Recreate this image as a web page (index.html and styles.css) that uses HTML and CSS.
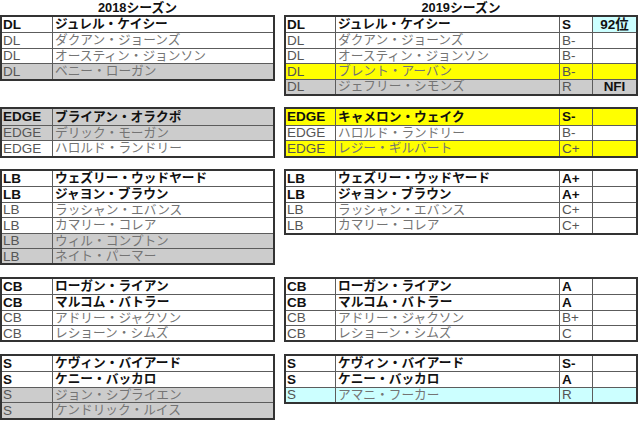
FILE: index.html
```html
<!DOCTYPE html>
<html lang="ja">
<head>
<meta charset="utf-8">
<link rel="stylesheet" href="styles.css">
</head>
<body>
<div class="sheet">
  <div class="section titles">
    <div class="title t18w">2018シーズン</div>
    <div class="title t19w">2019シーズン</div>
  </div>

  <div class="section">
    <div class="tbl t18">
      <div class="row b"><span class="c p">DL</span><span class="c n">ジュレル・ケイシー</span></div>
      <div class="row"><span class="c p">DL</span><span class="c n">ダクアン・ジョーンズ</span></div>
      <div class="row"><span class="c p">DL</span><span class="c n">オースティン・ジョンソン</span></div>
      <div class="row g"><span class="c p">DL</span><span class="c n">ベニー・ローガン</span></div>
    </div>
    <div class="tbl t19">
      <div class="row b"><span class="c p">DL</span><span class="c n">ジュレル・ケイシー</span><span class="c r">S</span><span class="c x rank">92位</span></div>
      <div class="row"><span class="c p">DL</span><span class="c n">ダクアン・ジョーンズ</span><span class="c r">B-</span><span class="c x"></span></div>
      <div class="row"><span class="c p">DL</span><span class="c n">オースティン・ジョンソン</span><span class="c r">B-</span><span class="c x"></span></div>
      <div class="row y"><span class="c p">DL</span><span class="c n">ブレント・アーバン</span><span class="c r">B-</span><span class="c x"></span></div>
      <div class="row g"><span class="c p">DL</span><span class="c n">ジェフリー・シモンズ</span><span class="c r">R</span><span class="c x nfi">NFI</span></div>
    </div>
  </div>

  <div class="section">
    <div class="tbl t18">
      <div class="row b g"><span class="c p">EDGE</span><span class="c n">ブライアン・オラクポ</span></div>
      <div class="row g"><span class="c p">EDGE</span><span class="c n">デリック・モーガン</span></div>
      <div class="row"><span class="c p">EDGE</span><span class="c n">ハロルド・ランドリー</span></div>
    </div>
    <div class="tbl t19">
      <div class="row b y"><span class="c p">EDGE</span><span class="c n">キャメロン・ウェイク</span><span class="c r">S-</span><span class="c x"></span></div>
      <div class="row"><span class="c p">EDGE</span><span class="c n">ハロルド・ランドリー</span><span class="c r">B-</span><span class="c x"></span></div>
      <div class="row y"><span class="c p">EDGE</span><span class="c n">レジー・ギルバート</span><span class="c r">C+</span><span class="c x"></span></div>
    </div>
  </div>

  <div class="section">
    <div class="tbl t18">
      <div class="row b"><span class="c p">LB</span><span class="c n">ウェズリー・ウッドヤード</span></div>
      <div class="row b"><span class="c p">LB</span><span class="c n">ジャヨン・ブラウン</span></div>
      <div class="row"><span class="c p">LB</span><span class="c n">ラッシャン・エバンス</span></div>
      <div class="row"><span class="c p">LB</span><span class="c n">カマリー・コレア</span></div>
      <div class="row g"><span class="c p">LB</span><span class="c n">ウィル・コンプトン</span></div>
      <div class="row g"><span class="c p">LB</span><span class="c n">ネイト・パーマー</span></div>
    </div>
    <div class="tbl t19">
      <div class="row b"><span class="c p">LB</span><span class="c n">ウェズリー・ウッドヤード</span><span class="c r">A+</span><span class="c x"></span></div>
      <div class="row b"><span class="c p">LB</span><span class="c n">ジャヨン・ブラウン</span><span class="c r">A+</span><span class="c x"></span></div>
      <div class="row"><span class="c p">LB</span><span class="c n">ラッシャン・エバンス</span><span class="c r">C+</span><span class="c x"></span></div>
      <div class="row"><span class="c p">LB</span><span class="c n">カマリー・コレア</span><span class="c r">C+</span><span class="c x"></span></div>
    </div>
  </div>

  <div class="section">
    <div class="tbl t18">
      <div class="row b"><span class="c p">CB</span><span class="c n">ローガン・ライアン</span></div>
      <div class="row b"><span class="c p">CB</span><span class="c n">マルコム・バトラー</span></div>
      <div class="row"><span class="c p">CB</span><span class="c n">アドリー・ジャクソン</span></div>
      <div class="row"><span class="c p">CB</span><span class="c n">レショーン・シムズ</span></div>
    </div>
    <div class="tbl t19">
      <div class="row b"><span class="c p">CB</span><span class="c n">ローガン・ライアン</span><span class="c r">A</span><span class="c x"></span></div>
      <div class="row b"><span class="c p">CB</span><span class="c n">マルコム・バトラー</span><span class="c r">A</span><span class="c x"></span></div>
      <div class="row"><span class="c p">CB</span><span class="c n">アドリー・ジャクソン</span><span class="c r">B+</span><span class="c x"></span></div>
      <div class="row"><span class="c p">CB</span><span class="c n">レショーン・シムズ</span><span class="c r">C</span><span class="c x"></span></div>
    </div>
  </div>

  <div class="section">
    <div class="tbl t18">
      <div class="row b"><span class="c p">S</span><span class="c n">ケヴィン・バイアード</span></div>
      <div class="row b"><span class="c p">S</span><span class="c n">ケニー・バッカロ</span></div>
      <div class="row g"><span class="c p">S</span><span class="c n">ジョン・シプライエン</span></div>
      <div class="row g"><span class="c p">S</span><span class="c n">ケンドリック・ルイス</span></div>
    </div>
    <div class="tbl t19">
      <div class="row b"><span class="c p">S</span><span class="c n">ケヴィン・バイアード</span><span class="c r">S-</span><span class="c x"></span></div>
      <div class="row b"><span class="c p">S</span><span class="c n">ケニー・バッカロ</span><span class="c r">A</span><span class="c x"></span></div>
      <div class="row cy"><span class="c p">S</span><span class="c n">アマニ・フーカー</span><span class="c r">R</span><span class="c x"></span></div>
    </div>
  </div>
</div>
</body>
</html>
```

FILE: styles.css
```css
html, body {
  margin: 0;
  padding: 0;
  background: #ffffff;
}

body {
  font-family: "Liberation Sans", "Noto Sans CJK JP", sans-serif;
  font-size: 13.5px;
  color: #555555;
}

.sheet {
  width: 640px;
}

.section {
  display: flex;
  align-items: flex-start;
  gap: 9px;
  margin-bottom: 11.4px;
}

.titles {
  height: 15px;
  margin-bottom: 0;
}

.title {
  font-weight: bold;
  font-size: 12.8px;
  color: #111111;
  text-align: center;
  line-height: 16px;
}

.t18w { width: 275px; }
.t19w { width: 354px; }

.tbl {
  border: 2px solid #333333;
  display: flex;
  flex-direction: column;
  background: #ffffff;
}

.t18 { width: 275px; box-sizing: border-box; }
.t19 { width: 354px; box-sizing: border-box; }

.row {
  display: grid;
  height: 15.41px;
  box-sizing: border-box;
}

.row + .row {
  border-top: 1px solid #5c5c5c;
}

.t18 .row { grid-template-columns: 50px 221px; }
.t19 .row { grid-template-columns: 49px 224px 33px 44px; }

.c {
  display: flex;
  align-items: center;
  padding-left: 2px;
  white-space: nowrap;
  overflow: hidden;
  line-height: 1;
}

.c + .c {
  border-left: 1px solid #5c5c5c;
}

.p { padding-left: 1px; }

.n {
  font-size: 12.7px;
  color: #747474;
}

.row.b .c {
  font-weight: bold;
  color: #111111;
}

.g { background: #cccccc; }
.y { background: #ffff00; }
.cy { background: #ccffff; }

.x {
  justify-content: center;
  padding-left: 0;
}

.rank {
  background: #ccffff;
}

.nfi {
  font-weight: bold;
  color: #111111;
}
```
